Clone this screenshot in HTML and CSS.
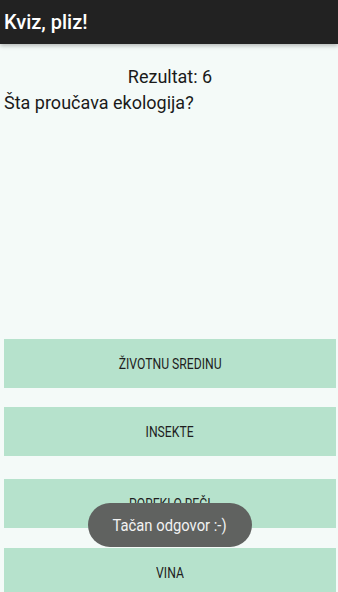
FILE: index.html
```html
<!DOCTYPE html>
<html lang="sr">
<head>
<meta charset="utf-8">
<title>Kviz, pliz!</title>
<link rel="stylesheet" href="styles.css">
</head>
<body>
<header class="toolbar"><h1 class="title">Kviz, pliz!</h1></header>
<main class="content">
  <p class="score">Rezultat: 6</p>
  <p class="question">Šta proučava ekologija?</p>
  <div class="answers">
    <button class="answer"><span class="narrow">ŽIVOTNU SREDINU</span></button>
    <button class="answer"><span class="narrow">INSEKTE</span></button>
    <button class="answer"><span class="narrow">POREKLO REČI</span></button>
    <button class="answer"><span class="narrow">VINA</span></button>
  </div>
</main>
<div class="toast"><span class="narrow">Tačan odgovor :-)</span></div>
</body>
</html>
```
FILE: styles.css
```css
html, body {
  margin: 0;
  padding: 0;
  height: 100%;
  overflow: hidden;
}
body {
  background: #f4faf8;
  font-family: Roboto, "Noto Sans", sans-serif;
  color: #1a1a1a;
}
.toolbar {
  height: 44px;
  background: #222222;
  box-shadow: 0 2px 4px rgba(0,0,0,0.25);
  display: flex;
  align-items: center;
  padding: 0 4px;
  position: relative;
}
.title {
  margin: 0;
  color: #ffffff;
  font-size: 20px;
  font-weight: 500;
  line-height: 24px;
}
.content {
  padding: 0 2px 0 4px;
  display: flex;
  flex-direction: column;
}
.score {
  margin: 21px 0 0;
  text-align: center;
  font-size: 18px;
  line-height: 24px;
}
.question {
  margin: 0;
  font-size: 18px;
  line-height: 28px;
}
.answers {
  margin-top: 222px;
  display: flex;
  flex-direction: column;
}
.answer {
  height: 49px;
  border: none;
  background: #b6e2cc;
  font-family: Roboto, "Noto Sans", sans-serif;
  font-size: 14px;
  font-weight: 400;
  color: #1e1e1e;
  padding: 0;
}
.narrow {
  display: inline-block;
  transform: scaleX(0.87);
  white-space: nowrap;
}
.answer:nth-child(1) { margin-bottom: 19px; }
.answer:nth-child(2) { margin-bottom: 23px; }
.answer:nth-child(3) { margin-bottom: 20px; }
.toast {
  position: fixed;
  left: 88px;
  top: 503px;
  width: 164px;
  height: 44px;
  border-radius: 22px;
  background: #606260;
  color: #f2f2f2;
  font-size: 17px;
  display: flex;
  align-items: center;
  justify-content: center;
}
```
